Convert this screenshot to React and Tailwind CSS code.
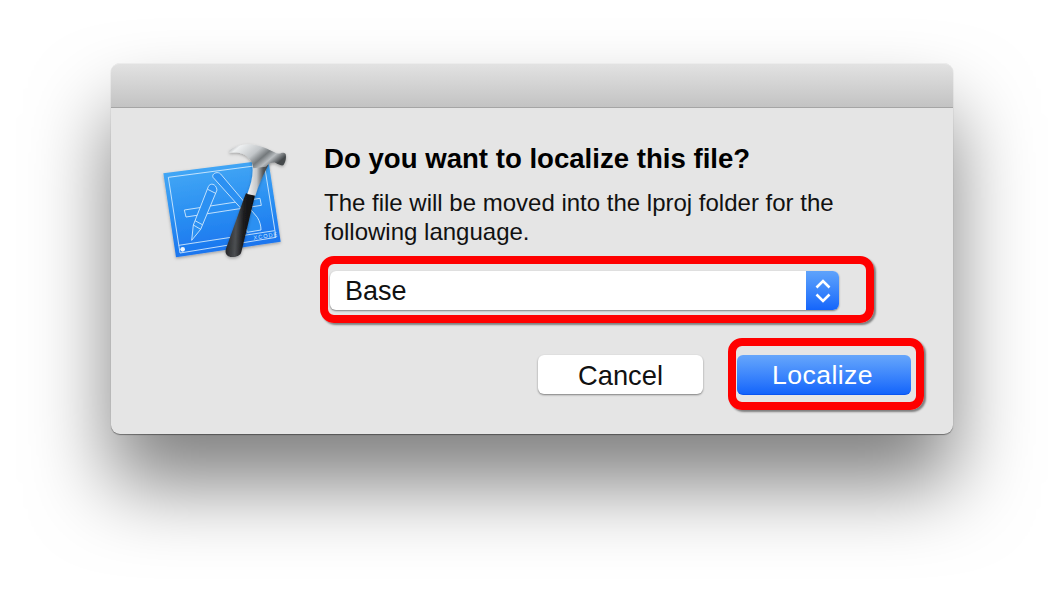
import React from "react";

function XcodeIcon() {
  return (
    <svg width="160" height="140" viewBox="0 0 480 420" className="block">
      <defs>
        <linearGradient id="bp" x1="0.4" y1="0" x2="0.6" y2="1">
          <stop offset="0" stopColor="#45a9f5" />
          <stop offset="0.5" stopColor="#2a8ff2" />
          <stop offset="1" stopColor="#1870ee" />
        </linearGradient>
        <linearGradient id="metal" x1="0" y1="0" x2="1" y2="0.5">
          <stop offset="0" stopColor="#8d9093" />
          <stop offset="0.18" stopColor="#eef0f1" />
          <stop offset="0.5" stopColor="#c2c6c9" />
          <stop offset="0.68" stopColor="#74797c" />
          <stop offset="0.82" stopColor="#b9bdc0" />
          <stop offset="1" stopColor="#44484b" />
        </linearGradient>
        <linearGradient id="neck" x1="0" y1="0" x2="1" y2="0">
          <stop offset="0" stopColor="#f4f4f4" />
          <stop offset="0.45" stopColor="#c3c6c9" />
          <stop offset="0.75" stopColor="#54585b" />
          <stop offset="1" stopColor="#3a3d40" />
        </linearGradient>
        <linearGradient id="grip" x1="0" y1="0" x2="1" y2="0.1">
          <stop offset="0" stopColor="#1a1a1c" />
          <stop offset="0.4" stopColor="#4c4f52" />
          <stop offset="0.65" stopColor="#1c1c1e" />
          <stop offset="1" stopColor="#0d0d0e" />
        </linearGradient>
        <filter id="soft" x="-20%" y="-20%" width="140%" height="140%">
          <feDropShadow dx="0" dy="4" stdDeviation="5" floodColor="#000" floodOpacity="0.3" />
        </filter>
      </defs>
      <polygon points="70,130 385,90 422,335 108,382" fill="url(#bp)" filter="url(#soft)" />
      <g fill="none" stroke="#d8ecfd" strokeWidth="2.6" strokeLinejoin="round">
        <polygon points="85,142 373,104 408,322 120,369" />
        <line x1="116" y1="346" x2="404" y2="302" />
        <polygon points="133,240 360,205 364,226 138,261" />
        <path d="M219,142 C214,132 232,122 242,132 L352,262 C360,275 363,288 363,300 L322,307 L300,232 Z" fill="#2b90f2" />
        <path d="M155,331 L160,285 L205,170 C210,158 228,160 231,180 L182,298 Z" fill="#2b90f2" />
        <line x1="160" y1="285" x2="182" y2="298" />
        <line x1="165" y1="272" x2="187" y2="284" />
        <line x1="203" y1="178" x2="227" y2="190" />
      </g>
      <circle cx="128" cy="358" r="7" fill="#eef6fe" />
      <text x="341" y="329" fontFamily="'Liberation Sans', sans-serif" fontSize="17" letterSpacing="3" fill="#d6eafc" transform="rotate(-8 341 329)">XCODE</text>
      <g filter="url(#soft)">
        <path d="M318,190 L345,195 L304,366 C300,384 262,388 257,368 C256,362 258,355 262,345 L312,205 Z" fill="url(#grip)" />
        <path d="M322,192 C334,160 342,130 336,100 L385,105 C370,135 355,165 346,197 Z" fill="url(#neck)" />
        <path d="M268,62 C285,48 315,40 340,44 C365,47 385,58 402,66 C410,70 418,72 422,70 C428,67 434,69 437,72 C439,82 438,96 430,106 C424,108 414,102 406,98 C395,97 385,102 378,110 L340,115 C338,90 320,72 296,68 C284,67 274,68 268,68 Z" fill="url(#metal)" />
      </g>
    </svg>
  );
}

export default function App() {
  return (
    <div className="w-[1064px] h-[594px] bg-white overflow-hidden pt-[63px] pl-[111px] font-['Liberation_Sans',Arial,sans-serif]">
      <div className="w-[842px] h-[371px] rounded-[9px] bg-[#e5e5e5] flex flex-col shadow-[0_50px_80px_rgba(0,0,0,0.5),0_1px_1px_rgba(0,0,0,0.4)]">
        <div className="h-[45px] shrink-0 rounded-t-[9px] border-t border-[#ececec] border-b-[#a5a5a5] border-b bg-gradient-to-b from-[#e2e2e2] to-[#c3c3c3]" />
        <div className="flex flex-1">
          <div className="w-[213px] shrink-0 pl-[29px] pt-[22px]">
            <XcodeIcon />
          </div>
          <div className="flex flex-col pt-[35px] text-[#111]">
            <h1 className="text-[27.6px] leading-[32px] font-bold text-black whitespace-nowrap">Do you want to localize this file?</h1>
            <p className="mt-[13px] w-[530px] text-[24px] leading-[29px]">
              The file will be moved into the lproj folder for the following language.
            </p>
            <div className="relative mt-[25px] ml-[6px] w-[509px] h-[39px] flex rounded-[6px] bg-white shadow-[0_1px_2px_rgba(0,0,0,0.45)]">
              <div className="flex-1 pl-[15px] text-[27px] leading-[41px]">Base</div>
              <div className="w-[33px] rounded-r-[6px] bg-gradient-to-b from-[#5fa3fb] to-[#1465fb] flex items-center justify-center">
                <svg width="20" height="30" viewBox="0 0 20 30" fill="none" stroke="#fff" strokeWidth="2.6">
                  <path d="M3.5 11.5 L10 5 L16.5 11.5" />
                  <path d="M3.5 18.5 L10 25 L16.5 18.5" />
                </svg>
              </div>
              <div className="absolute left-[-10px] top-[-15px] w-[554px] h-[67px] rounded-[14px] border-[8px] border-[#ff0000] shadow-[2px_2px_2px_rgba(0,0,0,0.45)]" />
            </div>
            <div className="mt-[45px] ml-[214px] flex gap-[34px]">
              <div className="w-[165px] h-[39px] rounded-[6px] bg-white text-center text-[27.3px] leading-[41px] shadow-[0_1px_2px_rgba(0,0,0,0.45)]">Cancel</div>
              <div className="relative w-[174px] h-[40px] rounded-[6px] bg-gradient-to-b from-[#66a6fb] to-[#1264fb] text-center text-white text-[26.6px] leading-[41px] tracking-[0.4px] pr-[3px] border-b border-[#0a55f0]">
                Localize
                <div className="absolute left-[-9px] top-[-17px] w-[196px] h-[72px] rounded-[14px] border-[8px] border-[#ff0000] shadow-[2px_2px_2px_rgba(0,0,0,0.45)]" />
              </div>
            </div>
          </div>
        </div>
      </div>
    </div>
  );
}
